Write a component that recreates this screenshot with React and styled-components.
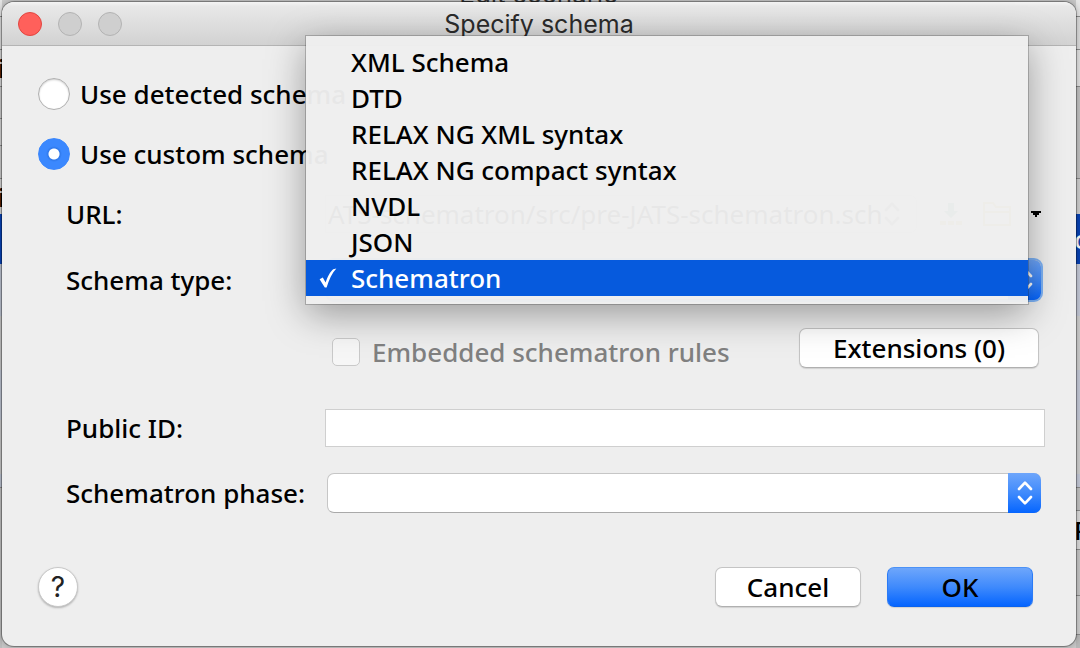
import React from "react";
import styled, { createGlobalStyle, css } from "styled-components";

const GlobalStyle = createGlobalStyle`
  *, *::before, *::after { box-sizing: border-box; }
  body {
    margin: 0;
    background: #c8c8c8;
    color: #000;
    font-family: "Noto Sans", "Open Sans", sans-serif;
    font-size: 26px;
    font-weight: 500;
    line-height: 36px;
  }
  button, input, select { font: inherit; color: inherit; }
`;

const Screen = styled.div`
  display: grid;
  min-height: 100vh;
  overflow: hidden;
`;

/* The scenario window that shows round the edges of the dialog. */
const BackWindow = styled.div`
  grid-area: 1 / 1;
  display: flex;
  justify-content: space-between;
  height: 100vh;
  overflow: hidden;
  background: #c9c9c9;
`;

const BackTitle = styled.div`
  font-family: Inter, Roboto, sans-serif;
  font-weight: 400;
  margin-top: -24px;
  height: 36px;
  color: #333;
`;

const BackEdge = styled.div`
  width: ${(p) => p.$width}px;
  display: flex;
  flex-direction: column;
`;

const Strip = styled.div`
  flex: none;
  height: ${(p) => p.$h}px;
  background: ${(p) => p.$bg};
  border-top: ${(p) => (p.$line ? "1px solid #8c8c8c" : "0")};
  color: ${(p) => (p.$light ? "#fff" : "#000")};
  overflow: hidden;
  display: flex;
  align-items: center;
  text-indent: -2px;
`;

const Dialog = styled.div`
  grid-area: 1 / 1;
  z-index: 1;
  display: flex;
  flex-direction: column;
  margin: 2px 4px 2px 2px;
  border-radius: 12px;
  background: #eee;
  box-shadow: 0 0 0 1px rgba(0, 0, 0, 0.3), 0 0 6px 1px rgba(0, 0, 0, 0.25);
`;

const TitleBar = styled.header`
  display: grid;
  grid-template-columns: 1fr auto 1fr;
  align-items: center;
  height: 44px;
  padding: 0 16px;
  border-bottom: 1px solid #b4b4b4;
  border-radius: 12px 12px 0 0;
  background: linear-gradient(#f4f4f4, #e8e8e8 10%, #d2d2d2);
`;

const Lights = styled.div`
  display: flex;
  gap: 16px;
`;

const Light = styled.button`
  width: 24px;
  height: 24px;
  padding: 0;
  border-radius: 50%;
  border: 1px solid ${(p) => (p.$close ? "#e24640" : "#b3b3b3")};
  background: ${(p) => (p.$close ? "#ff605b" : "#cfcfcf")};
`;

const Title = styled.h1`
  margin: 0;
  font-family: Inter, Roboto, sans-serif;
  font-size: 25px;
  font-weight: 400;
  color: #2b2b2b;
`;

const Body = styled.form`
  flex: 1;
  display: flex;
  flex-direction: column;
  padding: 18px 31px 39px 36px;
`;

const Choice = styled.label`
  display: flex;
  align-items: center;
  align-self: flex-start;
  gap: ${(p) => (p.$small ? 12 : 10)}px;
  height: 60px;
  color: ${(p) => (p.$muted ? "#808080" : "#000")};
`;

const Radio = styled.input`
  appearance: none;
  width: 32px;
  height: 32px;
  margin: 0;
  border-radius: 50%;
  border: 1px solid #b0b0b0;
  background: #fff;
  box-shadow: inset 0 1px 2px rgba(0, 0, 0, 0.2);
  &:checked {
    border-color: #3b87fd;
    background: radial-gradient(circle, #fff 5px, #2f78ea 6px, #3b88fe 8px);
    box-shadow: none;
  }
`;

const Check = styled.input`
  appearance: none;
  width: 28px;
  height: 28px;
  margin: 0;
  border-radius: 5px;
  border: 1px solid #c9c9c9;
  background: #f6f6f6;
`;

const Fields = styled.div`
  display: grid;
  grid-template-columns: 259px 1fr;
  grid-template-rows: 60px 72px 72px 80px 50px;
  align-items: center;
  padding-left: 28px;
`;

const Line = styled.div`
  display: flex;
  align-items: center;
  min-width: 0;
`;

const RuleLine = styled(Line)`
  grid-column: 2;
  justify-content: space-between;
  padding: 0 6px 0 7px;
`;

const TextBox = styled.input`
  flex: 1;
  min-width: 0;
  width: 100%;
  height: 38px;
  padding: 0 2px;
  border: 1px solid #cfcfcf;
  background: #fff;
`;

const UrlCombo = styled.div`
  flex: 1;
  min-width: 0;
  display: flex;
  align-items: center;
  height: 38px;
  padding-right: 16px;
  border: 1px solid #dcdcdc;
  border-radius: 0 7px 7px 0;
`;

const UrlInput = styled.input`
  flex: 1;
  min-width: 0;
  padding: 0 0 0 2px;
  border: 0;
  background: none;
  font-weight: 400;
`;

const UrlTools = styled.div`
  display: flex;
  align-items: center;
  gap: 20px;
  padding: 0 4px 0 22px;
`;

const ToolButton = styled.button`
  display: flex;
  padding: 0;
  border: 0;
  background: none;
`;

const SelectBox = styled.div`
  position: relative;
  flex: 1;
  display: flex;
  height: 40px;
  margin: 0 4px 0 2px;
  border-radius: 7px;
  ${(p) => p.$focused && css`box-shadow: 0 0 0 2px #7db2f5;`}
`;

const Select = styled.select`
  appearance: none;
  width: 100%;
  padding: 0 40px 0 10px;
  border: 1px solid #c6c6c6;
  border-bottom-color: #a9a9a9;
  border-radius: 7px;
  background: #fff;
`;

const Stepper = styled.span`
  position: absolute;
  top: 0;
  right: 0;
  bottom: 0;
  width: 33px;
  display: flex;
  align-items: center;
  justify-content: center;
  border-radius: 0 7px 7px 0;
  background: linear-gradient(#6ea6fb, #3f8afc 50%, #0565ff);
  pointer-events: none;
`;

const Menu = styled.ul`
  position: absolute;
  z-index: 2;
  left: -21px;
  right: 13px;
  bottom: -4px;
  margin: 0;
  padding: 8px 0;
  list-style: none;
  background: rgba(238, 238, 238, 0.97);
  box-shadow: 0 0 0 1px rgba(0, 0, 0, 0.2), 0 10px 36px rgba(0, 0, 0, 0.36);
`;

const MenuItem = styled.li`
  display: grid;
  grid-template-columns: 18px 1fr;
  align-items: center;
  column-gap: 14px;
  height: 36px;
  padding-left: 13px;
  white-space: nowrap;
  ${(p) => p.$selected && css`
    background: rgba(1, 87, 220, 0.98);
    color: #fff;
  `}
`;

const Button = styled.button`
  width: 146px;
  height: 40px;
  padding: 0;
  border: 1px solid #c4c4c4;
  border-bottom-color: #b0b0b0;
  border-radius: 7px;
  background: #fff;
  box-shadow: 0 1px 1px rgba(0, 0, 0, 0.12);
  ${(p) => p.$wide && css`
    width: 240px;
    margin-bottom: 8px;
  `}
  ${(p) => p.$primary && css`
    border-color: #4c92f6 #2b7bf6 #0a62ee;
    background: linear-gradient(#6ea6fb, #3f8afc 50%, #0565ff);
  `}
`;

const Footer = styled.footer`
  display: flex;
  align-items: center;
  gap: 26px;
  margin-top: auto;
  padding-right: 12px;
`;

const Help = styled.button`
  width: 40px;
  height: 40px;
  margin-right: auto;
  padding: 0;
  border: 1px solid #c8c8c8;
  border-radius: 50%;
  background: #fff;
  box-shadow: 0 1px 2px rgba(0, 0, 0, 0.25);
  font-family: Inter, Roboto, sans-serif;
  font-size: 28px;
  font-weight: 400;
  color: #222;
`;

const Chevrons = ({ color = "#fff" }) => (
  <svg width="16" height="24" viewBox="0 0 16 24" fill="none" stroke={color} strokeWidth="2.6" strokeLinecap="round" strokeLinejoin="round" aria-hidden="true">
    <path d="M2 8 8 1.6 14 8M2 16l6 6.4L14 16" />
  </svg>
);

const Tick = () => (
  <svg width="18" height="20" viewBox="0 0 18 20" fill="#fff" aria-hidden="true">
    <path d="M0.6 11.2 3.8 9.6 6.6 14.6C8.6 8.4 11.4 3.4 14.2 1.2L17.4 0.4C13 5 10 11.6 7.6 19.6H5.8Z" />
  </svg>
);

const Download = () => (
  <svg width="24" height="24" viewBox="0 0 24 24" aria-hidden="true">
    <path d="M9 1h6v8h4l-7 7-7-7h4z" fill="#4f9a73" />
    <path d="M1 19h6v4H1zM9 19h6v4H9zM17 19h6v4h-6z" fill="#d9b34c" />
  </svg>
);

const Folder = () => (
  <svg width="28" height="24" viewBox="0 0 28 24" fill="none" stroke="#d9b34c" strokeWidth="2" aria-hidden="true">
    <path d="M1 23V1h9l3 4h14v18zM1 10h26" />
  </svg>
);

const Caret = () => (
  <svg width="10" height="6" viewBox="0 0 10 6" aria-hidden="true">
    <path d="M0 0h10v2H8v2H6v2H4V4H2V2H0z" />
  </svg>
);

const TYPES = [
  "XML Schema",
  "DTD",
  "RELAX NG XML syntax",
  "RELAX NG compact syntax",
  "NVDL",
  "JSON",
  "Schematron",
];

const LEFT = [
  { h: 16, bg: "#e4e4e4" },
  { h: 33, bg: "#d9d9d9", line: true },
  { h: 37, bg: "#d2d2d2", line: true, text: "i" },
  { h: 32, bg: "#c8c8c8", line: true },
  { h: 27, bg: "#d0d0d0", line: true },
  { h: 33, bg: "#c8c8c8", line: true },
  { h: 36, bg: "#d2d2d2", line: true, text: "i" },
  { h: 50, bg: "#0843b4" },
  { h: 52, bg: "#b9bfcd" },
  { h: 54, bg: "#c4c4c4" },
  { h: 50, bg: "#b9bfcd" },
  { h: 54, bg: "#c4c4c4" },
  { h: 13, bg: "#b9bfcd" },
  { h: 161, bg: "#bdbdbd", line: true },
];

const RIGHT = [
  { h: 16, bg: "#e6e6e6" },
  { h: 33, bg: "#dedede", line: true },
  { h: 37, bg: "#e2e2e2", line: true },
  { h: 92, bg: "#c2c2c2", line: true },
  { h: 36, bg: "#cfcfcf", line: true },
  { h: 50, bg: "#0843b4", light: true, text: "c" },
  { h: 52, bg: "#c5cad8" },
  { h: 54, bg: "#cfcfcf" },
  { h: 50, bg: "#c5cad8" },
  { h: 54, bg: "#cfcfcf" },
  { h: 13, bg: "#c5cad8" },
  { h: 23, bg: "#c2c2c2", line: true },
  { h: 39, bg: "#dcdcdc", line: true, text: "R" },
  { h: 46, bg: "#c6c6c6", line: true },
  { h: 39, bg: "#cfcfcf", line: true },
  { h: 14, bg: "#b8b8b8", line: true },
];

const Edge = ({ strips, width }) => (
  <BackEdge $width={width}>
    {strips.map((s, i) => (
      <Strip key={i} $h={s.h} $bg={s.bg} $line={s.line} $light={s.light}>
        {s.text}
      </Strip>
    ))}
  </BackEdge>
);

export default function App() {
  return (
    <>
      <GlobalStyle />
      <Screen>
        <BackWindow aria-hidden="true">
          <Edge strips={LEFT} width={2} />
          <BackTitle>Edit scenario</BackTitle>
          <Edge strips={RIGHT} width={4} />
        </BackWindow>
        <Dialog role="dialog" aria-labelledby="dialog-title">
          <TitleBar>
            <Lights>
              <Light type="button" $close aria-label="Close" />
              <Light type="button" disabled aria-label="Minimize" />
              <Light type="button" disabled aria-label="Zoom" />
            </Lights>
            <Title id="dialog-title">Specify schema</Title>
          </TitleBar>
          <Body onSubmit={(e) => e.preventDefault()}>
            <Choice>
              <Radio type="radio" name="source" />
              Use detected schema
            </Choice>
            <Choice>
              <Radio type="radio" name="source" defaultChecked />
              Use custom schema
            </Choice>
            <Fields>
              <label htmlFor="url">URL:</label>
              <Line>
                <UrlCombo>
                  <UrlInput id="url" defaultValue="ATS-schematron/src/pre-JATS-schematron.sch" />
                  <ToolButton type="button" aria-label="History"><Chevrons color="#888" /></ToolButton>
                </UrlCombo>
                <UrlTools>
                  <ToolButton type="button" aria-label="Download"><Download /></ToolButton>
                  <ToolButton type="button" aria-label="Browse"><Folder /></ToolButton>
                  <ToolButton type="button" aria-label="More"><Caret /></ToolButton>
                </UrlTools>
              </Line>

              <label htmlFor="type">Schema type:</label>
              <Line>
                <SelectBox $focused>
                  <Select id="type" defaultValue="">
                    <option value="" />
                    {TYPES.map((t) => <option key={t}>{t}</option>)}
                  </Select>
                  <Stepper><Chevrons /></Stepper>
                  <Menu role="listbox" aria-label="Schema type">
                    {TYPES.map((t) => {
                      const selected = t === "Schematron";
                      return (
                        <MenuItem key={t} role="option" aria-selected={selected} $selected={selected}>
                          <span>{selected && <Tick />}</span>
                          {t}
                        </MenuItem>
                      );
                    })}
                  </Menu>
                </SelectBox>
              </Line>

              <RuleLine>
                <Choice $small $muted>
                  <Check type="checkbox" disabled />
                  Embedded schematron rules
                </Choice>
                <Button type="button" $wide>Extensions (0)</Button>
              </RuleLine>

              <label htmlFor="public-id">Public ID:</label>
              <TextBox id="public-id" />

              <label htmlFor="phase">Schematron phase:</label>
              <Line>
                <SelectBox>
                  <Select id="phase"><option /></Select>
                  <Stepper><Chevrons /></Stepper>
                </SelectBox>
              </Line>
            </Fields>
            <Footer>
              <Help type="button" aria-label="Help">?</Help>
              <Button type="button">Cancel</Button>
              <Button type="submit" $primary>OK</Button>
            </Footer>
          </Body>
        </Dialog>
      </Screen>
    </>
  );
}
